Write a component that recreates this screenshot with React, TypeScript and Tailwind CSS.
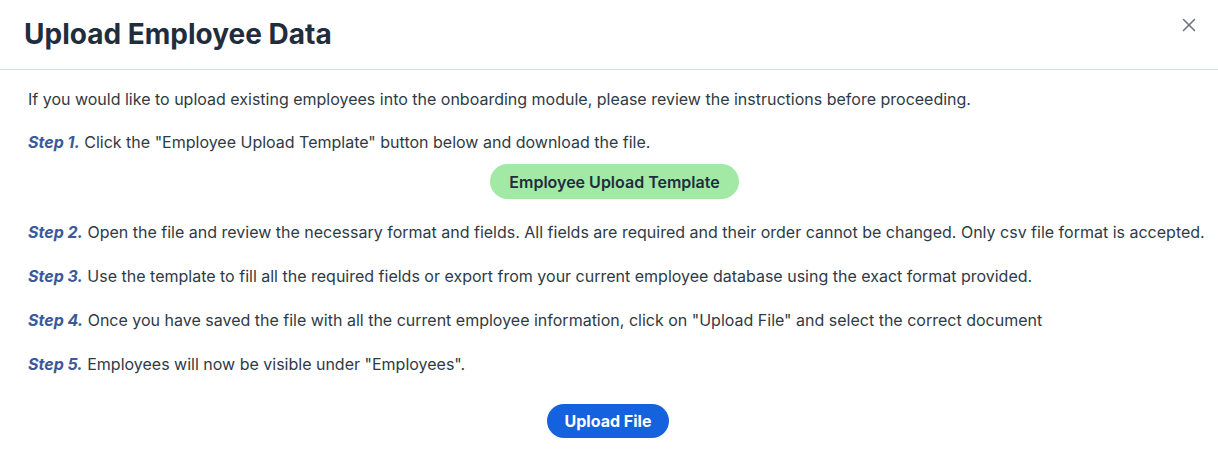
import { X } from 'lucide-react';

const steps: { label: string; text: string }[] = [
    { label: 'Step 2.', text: 'Open the file and review the necessary format and fields. All fields are required and their order cannot be changed. Only csv file format is accepted.' },
    { label: 'Step 3.', text: 'Use the template to fill all the required fields or export from your current employee database using the exact format provided.' },
    { label: 'Step 4.', text: 'Once you have saved the file with all the current employee information, click on "Upload File" and select the correct document' },
    { label: 'Step 5.', text: 'Employees will now be visible under "Employees".' },
];

function StepLine({ label, text }: { label: string; text: string }) {
    return (
        <p className="leading-[24px]">
            <span className="font-bold italic text-[#3b5a9a]">{label}</span> {text}
        </p>
    );
}

export default function App() {
    return (
        <div className="min-h-screen bg-white font-['Inter',sans-serif] text-[16px] text-[#2f3a45]">
            <header className="flex items-center justify-between border-b border-[#d5dbe1] pl-6 pr-[18px] pt-[17px] pb-[18px]">
                <h1 className="text-[28px] font-bold leading-[34px] text-[#1f2d3d]">Upload Employee Data</h1>
                <button type="button" className="-mt-[19px] text-[#6b7280]">
                    <X size={22} strokeWidth={1.7} />
                </button>
            </header>
            <main className="flex flex-col pl-7 pr-3 pt-[17px]">
                <p className="leading-[24px]">
                    If you would like to upload existing employees into the onboarding module, please review the instructions before proceeding.
                </p>
                <div className="mt-[19px]">
                    <StepLine
                        label="Step 1."
                        text='Click the "Employee Upload Template" button below and download the file.'
                    />
                </div>
                <div className="mt-[10px] flex justify-center pr-[5px]">
                    <button
                        type="button"
                        className="h-[35px] rounded-full bg-[#a2e9a6] px-[19px] text-[16px] font-semibold text-[#1f2d3d]"
                    >
                        Employee Upload Template
                    </button>
                </div>
                <div className="mt-[21px] flex flex-col gap-[20px]">
                    {steps.map((s) => (
                        <StepLine key={s.label} label={s.label} text={s.text} />
                    ))}
                </div>
                <div className="mt-[28px] flex justify-center pr-[18px]">
                    <button
                        type="button"
                        className="h-[34px] rounded-full bg-[#1562de] px-[18px] text-[16px] font-bold text-white"
                    >
                        Upload File
                    </button>
                </div>
            </main>
        </div>
    );
}
